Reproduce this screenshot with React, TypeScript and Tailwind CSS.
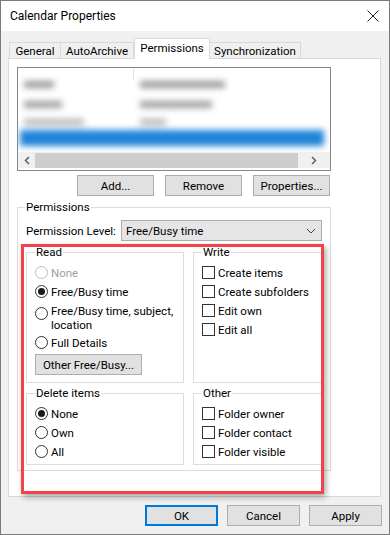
import React from "react";

const font = "font-['Segoe_UI',Roboto,'Noto_Sans',sans-serif]";

const Radio = ({ checked, disabled }: { checked?: boolean; disabled?: boolean }) => (
  <span
    className={`flex h-[13px] w-[13px] flex-shrink-0 items-center justify-center rounded-full border bg-white ${
      disabled ? "border-[#bcbcbc]" : "border-[#333333]"
    }`}
  >
    {checked && <span className="h-[7px] w-[7px] rounded-full bg-[#1a1a1a]" />}
  </span>
);

const Check = () => (
  <span className="h-[13px] w-[13px] flex-shrink-0 border border-[#333333] bg-white" />
);

const RadioRow = ({
  label,
  checked,
  disabled,
}: {
  label: React.ReactNode;
  checked?: boolean;
  disabled?: boolean;
}) => (
  <div className="flex h-[19px] items-center gap-[3px]">
    <Radio checked={checked} disabled={disabled} />
    <span className={disabled ? "text-[#a0a0a0]" : "text-black"}>{label}</span>
  </div>
);

const CheckRow = ({ label }: { label: string }) => (
  <div className="flex h-[19px] items-center gap-[3px]">
    <Check />
    <span>{label}</span>
  </div>
);

const Group = ({
  title,
  className,
  children,
}: {
  title: string;
  className?: string;
  children: React.ReactNode;
}) => (
  <fieldset className={`border border-[#dcdcdc] ${className ?? ""}`}>
    <legend className="px-[1px] leading-[16px]">{title}</legend>
    {children}
  </fieldset>
);

const Btn = ({ label, className }: { label: string; className?: string }) => (
  <button
    className={`flex h-[21px] items-center justify-center border border-[#adadad] bg-[#e1e1e1] text-black ${
      className ?? ""
    }`}
  >
    {label}
  </button>
);

export default function App() {
  return (
    <div
      className={`relative flex h-[535px] w-[390px] flex-col overflow-hidden border border-[#7a7a7a] bg-[#f0f0f0] text-[11.5px] leading-[16px] text-black ${font}`}
    >
      {/* title bar */}
      <div className="flex h-[30px] flex-shrink-0 items-center justify-between bg-white pl-[9px] pr-[9px]">
        <span className="text-[12px]">Calendar Properties</span>
        <svg width="12" height="12" viewBox="0 0 12 12" className="mr-[1px]">
          <path d="M0.5 0.5 L11.5 11.5 M11.5 0.5 L0.5 11.5" stroke="#222" strokeWidth="1" />
        </svg>
      </div>

      <div className="flex flex-col pl-[7px] pt-[7px]">
        {/* tabs */}
        <div className="flex items-end pl-[1px]">
          <div className="flex h-[16px] w-[52px] items-center justify-center border border-b-0 border-[#d9d9d9] bg-[#f0f0f0]">
            General
          </div>
          <div className="flex h-[16px] w-[73px] items-center justify-center border border-b-0 border-l-0 border-[#d9d9d9] bg-[#f0f0f0]">
            AutoArchive
          </div>
          <div className="relative z-10 mb-[-1px] flex h-[21px] w-[76px] items-center justify-center border border-b-0 border-[#d9d9d9] bg-white pb-[2px]">
            Permissions
          </div>
          <div className="flex h-[16px] w-[91px] items-center justify-center border border-b-0 border-l-0 border-[#d9d9d9] bg-[#f0f0f0]">
            Synchronization
          </div>
        </div>

        {/* panel */}
        <div className="flex h-[439px] w-[373px] flex-col border border-[#d9d9d9] bg-white pl-[8px] pt-[8px]">
          {/* list */}
          <div className="flex h-[104px] w-[314px] flex-col border border-[#828790] bg-white">
            <div className="relative h-[84px] overflow-hidden">
              <div className="absolute left-[115px] top-0 h-[12px] w-px bg-[#e5e5e5]" />
              <div className="flex flex-col px-[6px] pt-[6px] blur-[3px]">
                <div className="flex h-[20px] items-center">
                  <span className="h-[7px] w-[30px] bg-[#9a9a9a]" />
                  <span className="ml-[86px] h-[7px] w-[85px] bg-[#9a9a9a]" />
                </div>
                <div className="flex h-[20px] items-center">
                  <span className="h-[7px] w-[38px] bg-[#a0a0a0]" />
                  <span className="ml-[78px] h-[7px] w-[72px] bg-[#a0a0a0]" />
                </div>
                <div className="flex h-[16px] items-center">
                  <span className="h-[6px] w-[60px] bg-[#b4b4b4]" />
                  <span className="ml-[56px] h-[6px] w-[26px] bg-[#b4b4b4]" />
                </div>
                <div className="-ml-[4px] flex h-[16px] items-center bg-[#1e84d8]" />
              </div>
            </div>
            <div className="flex h-[16px] items-center bg-[#f0f0f0]">
              <span className="flex w-[17px] justify-center">
                <svg width="6" height="9" viewBox="0 0 6 9">
                  <path d="M5 1 L1.5 4.5 L5 8" stroke="#606060" strokeWidth="1.5" fill="none" />
                </svg>
              </span>
              <span className="h-[15px] flex-1 bg-[#cdcdcd]" />
              <span className="flex w-[32px] justify-center">
                <svg width="6" height="9" viewBox="0 0 6 9">
                  <path d="M1 1 L4.5 4.5 L1 8" stroke="#606060" strokeWidth="1.5" fill="none" />
                </svg>
              </span>
            </div>
          </div>

          {/* list buttons */}
          <div className="mt-[4px] flex w-[313px] justify-end gap-[11px]">
            <Btn label="Add..." className="w-[77px]" />
            <Btn label="Remove" className="w-[77px]" />
            <Btn label="Properties..." className="w-[77px]" />
          </div>

          {/* permissions group */}
          <fieldset className="mt-[3px] w-[314px] border border-[#dcdcdc] pb-[5px] pl-[8px]">
            <legend className="-ml-[1px] px-[1px] leading-[16px]">Permissions</legend>
            <div className="mt-[5px] flex items-center">
              <span className="w-[95px] whitespace-nowrap">Permission Level:</span>
              <div className="flex h-[21px] w-[201px] items-center justify-between border border-[#adadad] bg-[#e5e5e5] pl-[4px] pr-[5px]">
                <span>Free/Busy time</span>
                <svg width="10" height="6" viewBox="0 0 10 6">
                  <path d="M1 1 L5 5 L9 1" stroke="#444" strokeWidth="1" fill="none" />
                </svg>
              </div>
            </div>

            <div className="mt-[3px] flex gap-[9px]">
              <Group title="Read" className="h-[139px] w-[158px] pl-[8px] pt-[3px]">
                <RadioRow label="None" disabled />
                <RadioRow label="Free/Busy time" checked />
                <div className="flex items-start gap-[3px] pt-[3px]">
                  <span className="mt-[3px]">
                    <Radio />
                  </span>
                  <span className="leading-[14px]">
                    Free/Busy time, subject,
                    <br />
                    location
                  </span>
                </div>
                <div className="mt-[1px]">
                  <RadioRow label="Full Details" />
                </div>
                <Btn label="Other Free/Busy..." className="mt-[2px] w-[107px]" />
              </Group>
              <Group title="Write" className="h-[139px] w-[130px] pl-[8px] pt-[3px]">
                <CheckRow label="Create items" />
                <CheckRow label="Create subfolders" />
                <CheckRow label="Edit own" />
                <CheckRow label="Edit all" />
              </Group>
            </div>

            <div className="mt-[2px] flex gap-[9px]">
              <Group title="Delete items" className="h-[80px] w-[158px] pl-[8px] pt-[3px]">
                <RadioRow label="None" checked />
                <RadioRow label="Own" />
                <RadioRow label="All" />
              </Group>
              <Group title="Other" className="h-[80px] w-[130px] pl-[8px] pt-[3px]">
                <CheckRow label="Folder owner" />
                <CheckRow label="Folder contact" />
                <CheckRow label="Folder visible" />
              </Group>
            </div>
          </fieldset>
        </div>

        {/* dialog buttons */}
        <div className="mt-[8px] flex justify-end gap-[9px] pr-[7px]">
          <button className="flex h-[21px] w-[73px] items-center justify-center border-2 border-[#0078d7] bg-[#e1e1e1]">
            OK
          </button>
          <Btn label="Cancel" className="w-[73px]" />
          <Btn label="Apply" className="w-[73px]" />
        </div>
      </div>

      {/* annotation highlight */}
      <div className="pointer-events-none absolute left-[20px] top-[243px] h-[250px] w-[303px] border-[3px] border-[#f0434a] shadow-[2px_3px_6px_rgba(0,0,0,0.35)]" />
    </div>
  );
}
